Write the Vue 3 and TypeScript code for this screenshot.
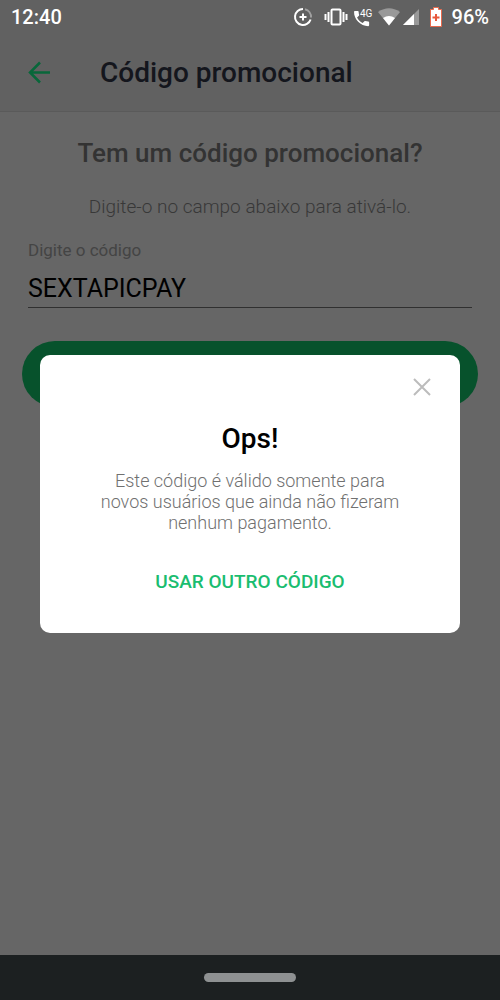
<script setup lang="ts">
import { ref } from 'vue'

const code = ref<string>('SEXTAPICPAY')
const dialogOpen = ref<boolean>(true)
const codeInput = ref<HTMLInputElement | null>(null)

function closeDialog(): void {
  dialogOpen.value = false
}

function useAnotherCode(): void {
  closeDialog()
  code.value = ''
  codeInput.value?.focus()
}
</script>

<template>
  <div class="screen">
    <div class="status-bar">
      <span class="clock">12:40</span>
      <div class="status-icons">
        <svg class="saver" width="20" height="20" viewBox="0 0 20 20" fill="none" stroke-width="2">
          <path d="M10 2a8 8 0 1 0 7.6 10.5" stroke="#fff" />
          <path d="M12 2.2a8 8 0 0 1 6 8.3" stroke="#a0a0a0" />
          <path d="M10 6.5v7M6.5 10h7" stroke="#fff" />
        </svg>
        <svg class="vibrate" width="24" height="20" viewBox="0 0 24 20" fill="none" stroke="#fff" stroke-width="2">
          <rect x="7.5" y="2.5" width="9" height="15" rx="1" />
          <path d="M4.500 5v10M1.500 7v6M19.500 5v10M22.500 7v6" />
        </svg>
        <svg class="call" width="22" height="20" viewBox="0 0 22 20">
          <path
            transform="translate(-1.500 1.500) scale(0.84)"
            fill="#fff"
            d="M6.620 10.790c1.440 2.830 3.760 5.140 6.590 6.590l2.200-2.200c.27-.27.67-.36 1.020-.24 1.120.37 2.330.57 3.570.57.55 0 1 .45 1 1V20c0 .55-.45 1-1 1-9.390 0-17-7.610-17-17 0-.55.45-1 1-1h3.500c.55 0 1 .45 1 1 0 1.250.2 2.450.57 3.570.11.35.03.74-.25 1.020z"
          />
          <text x="7" y="10" fill="#fff" font-family="Roboto, sans-serif" font-size="10" font-weight="400">4G</text>
        </svg>
        <svg class="wifi" width="22" height="20" viewBox="0 0 22 20">
          <path fill="#999" d="M0 5q11-7.500 22 0L11 18.500z" />
          <path fill="#fff" d="M5 11q6-4 12 0l-6 7.500z" />
        </svg>
        <svg class="signal" width="17" height="20" viewBox="0 0 17 20">
          <path fill="#999" d="M17 2v16H1z" />
          <path fill="#fff" d="M12 7v11H1z" />
        </svg>
        <svg class="battery" width="14" height="20" viewBox="0 0 14 20">
          <path fill="#fff" stroke="#e8694c" d="M4.500.5h5v2h3v17h-11v-17h3z" />
          <path d="M7 7v7M3.500 10.500h7" stroke="#e8593c" stroke-width="2" />
        </svg>
        <span class="percent">96%</span>
      </div>
    </div>

    <header class="app-bar">
      <button class="back" type="button" aria-label="Voltar">
        <svg width="24" height="24" viewBox="0 0 24 24" fill="none" stroke="#08673a" stroke-width="2.5">
          <path d="M23 11.500H2.500M13 1.500l-10 10 10 10" />
        </svg>
      </button>
      <h1>Código promocional</h1>
    </header>

    <main class="content">
      <h2>Tem um código promocional?</h2>
      <p class="hint">Digite-o no campo abaixo para ativá-lo.</p>
      <div class="field">
        <label for="promo-code">Digite o código</label>
        <input id="promo-code" ref="codeInput" v-model="code" type="text" autocomplete="off" spellcheck="false" />
      </div>
      <button class="activate" type="button" aria-label="Ativar código"></button>
    </main>

    <div v-if="dialogOpen" class="overlay">
      <section class="dialog" role="dialog" aria-modal="true" aria-labelledby="dialog-title">
        <button class="close" type="button" aria-label="Fechar" @click="closeDialog">
          <svg width="18" height="18" viewBox="0 0 18 18" fill="none" stroke="#bcbcbc" stroke-width="2">
            <path d="M1 1l16 16M17 1L1 17" />
          </svg>
        </button>
        <h2 id="dialog-title">Ops!</h2>
        <p>Este código é válido somente para novos usuários que ainda não fizeram nenhum pagamento.</p>
        <button class="another" type="button" @click="useAnotherCode">USAR OUTRO CÓDIGO</button>
      </section>
    </div>

    <nav class="nav-bar" aria-label="Sistema">
      <button class="home" type="button" aria-label="Início"></button>
    </nav>
  </div>
</template>

<style>
body {
  margin: 0;
  background: #666;
}
</style>

<style scoped>
.screen {
  position: relative;
  display: flex;
  flex-direction: column;
  min-height: 100vh;
  background: #666;
  color: #000;
  font-family: Roboto, "Liberation Sans", sans-serif;
}

h1,
h2,
p {
  margin: 0;
}

button {
  padding: 0;
  border: 0;
  background: none;
  font-family: inherit;
  cursor: pointer;
}

svg {
  display: block;
}

.status-bar {
  display: flex;
  align-items: center;
  justify-content: space-between;
  height: 34px;
  padding: 0 11px;
  background: #616161;
  color: #fff;
  font-size: 20px;
  font-weight: 500;
}

.status-icons {
  display: flex;
  align-items: center;
}

.saver {
  margin-right: 11px;
}

.vibrate {
  margin-right: 5px;
}

.call {
  margin-right: 3px;
}

.wifi {
  margin-right: 2px;
}

.signal {
  margin-right: 10px;
}

.battery {
  margin-right: 9px;
}

.app-bar {
  display: flex;
  align-items: center;
  gap: 49px;
  height: 77px;
  padding: 0 27px;
  border-bottom: 1px solid #5a5a5a;
  background: #616161;
}

h1 {
  color: #14161d;
  font-size: 28px;
  font-weight: 500;
  line-height: 34px;
}

.content {
  flex: 1;
  display: flex;
  flex-direction: column;
  padding: 24px 22px;
}

.content h2 {
  color: #333;
  font-size: 26px;
  font-weight: 500;
  line-height: 34px;
  text-align: center;
}

.hint {
  margin-top: 25px;
  color: #383838;
  font-size: 19px;
  font-weight: 300;
  line-height: 24px;
  text-align: center;
}

.field {
  display: flex;
  flex-direction: column;
  margin: 21px 6px 0;
}

label {
  color: #444;
  font-size: 17px;
  line-height: 20px;
}

input {
  box-sizing: border-box;
  width: 100%;
  height: 48px;
  padding: 9px 0 0;
  border: 0;
  border-bottom: 1px solid #303030;
  border-radius: 0;
  outline: 0;
  background: none;
  color: #000;
  font-family: inherit;
  font-size: 25px;
}

.activate {
  height: 66px;
  margin-top: 33px;
  border-radius: 33px;
  background: #07522c;
}

.overlay {
  position: absolute;
  inset: 34px 0 46px;
  display: flex;
  align-items: center;
  justify-content: center;
  padding: 0 40px;
}

.dialog {
  box-sizing: border-box;
  display: flex;
  flex-direction: column;
  align-items: center;
  width: 100%;
  max-width: 560px;
  padding: 18px 24px 35px;
  border-radius: 10px;
  background: #fff;
}

.close {
  display: grid;
  place-items: center;
  align-self: flex-end;
  width: 28px;
  height: 28px;
}

.dialog h2 {
  margin-top: 22px;
  font-size: 28px;
  font-weight: 500;
  line-height: 32px;
}

.dialog p {
  max-width: 320px;
  margin-top: 15px;
  color: #707070;
  font-size: 18px;
  font-weight: 300;
  line-height: 21px;
  text-align: center;
}

.another {
  margin-top: 33px;
  color: #1abd70;
  font-size: 19px;
  font-weight: 500;
  line-height: 32px;
}

.nav-bar {
  display: flex;
  align-items: center;
  justify-content: center;
  height: 45px;
  background: #1c2021;
}

.home {
  width: 92px;
  height: 9px;
  border-radius: 5px;
  background: #8e9192;
}
</style>
